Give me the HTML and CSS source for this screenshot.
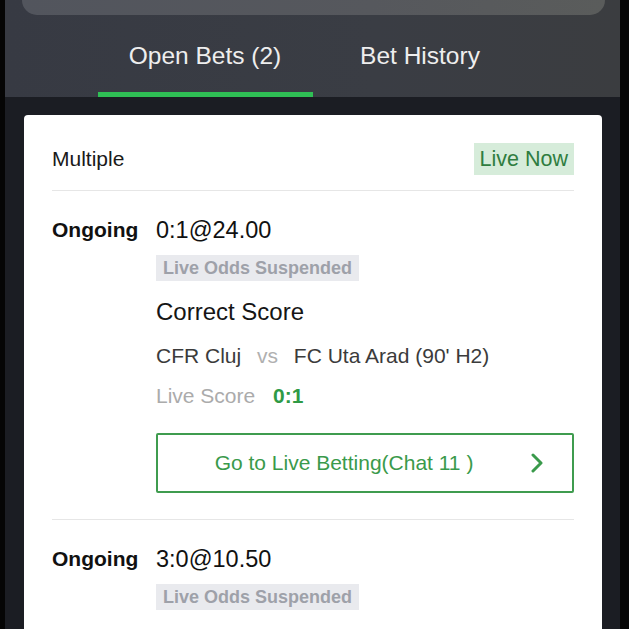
FILE: index.html
```html
<!DOCTYPE html>
<html lang="en">
<head>
    <meta charset="UTF-8">
    <meta name="viewport" content="width=device-width, initial-scale=1.0">
    <link rel="stylesheet" href="styles.css">
    <title>Open Bets</title>
</head>
<body>
    <div class="screen">
        <div class="header">
            <div class="search"></div>
            <div class="tabs">
                <div class="tab active">Open Bets (2)</div>
                <div class="tab">Bet History</div>
            </div>
        </div>

        <div class="content">
            <div class="card">
                <div class="cardHead">
                    <span class="betType">Multiple</span>
                    <span class="liveNow">Live Now</span>
                </div>

                <div class="bet">
                    <div class="status">Ongoing</div>
                    <div class="details">
                        <div class="odds">0:1@24.00</div>
                        <div class="suspended">Live Odds Suspended</div>
                        <div class="market">Correct Score</div>
                        <div class="teams">CFR Cluj <span class="vs">vs</span> FC Uta Arad (90' H2)</div>
                        <div class="score">Live Score <b>0:1</b></div>
                        <div class="liveBtn">
                            <span class="btnText">Go to Live Betting(Chat 11 )</span>
                            <svg class="chevron" width="14" height="20" viewBox="0 0 14 20">
                                <path d="M3 2 L11 10 L3 18" fill="none" stroke="#3a9a4b" stroke-width="3" stroke-linecap="round" stroke-linejoin="round"/>
                            </svg>
                        </div>
                    </div>
                </div>

                <div class="bet">
                    <div class="status">Ongoing</div>
                    <div class="details">
                        <div class="odds">3:0@10.50</div>
                        <div class="suspended">Live Odds Suspended</div>
                        <div class="market">Correct Score</div>
                    </div>
                </div>
            </div>
        </div>
    </div>
</body>
</html>
```

FILE: styles.css
```css
body{
    margin: 0;
    background-color: #050505;
    font-family: "Liberation Sans", Arial, sans-serif;
    overflow: hidden;
    height: 629px;
}

.screen{
    margin: 0 9px 0 5px;
    height: 629px;
    overflow: hidden;
    background-color: #1b1d23;
}

.header{
    background: linear-gradient(90deg, #373a43, #3a3d44 60%, #3b3d40);
    padding-top: 1px;
}

.search{
    margin: -31px 15px 0 17px;
    height: 45px;
    border-radius: 15px;
    background: linear-gradient(90deg, #52555d, #56585d 60%, #5a5c5b);
}

.tabs{
    display: flex;
    justify-content: center;
    height: 82px;
}

.tab{
    width: 215px;
    display: flex;
    justify-content: center;
    align-items: center;
    color: #eeeeee;
    font-size: 24.5px;
    box-sizing: border-box;
    border-bottom: 5px solid transparent;
    padding-top: 4px;
}

.tab.active{
    border-bottom-color: #2fbf55;
}

.content{
    padding: 18px 18px 0 19px;
}

.card{
    background-color: #ffffff;
    border-radius: 4px;
    padding: 28px 28px 0 28px;
    height: 600px;
}

.cardHead{
    display: flex;
    justify-content: space-between;
    align-items: center;
    padding-bottom: 15px;
    border-bottom: 1px solid #e6e6e6;
}

.betType{
    font-size: 21px;
    color: #1a1a1a;
}

.liveNow{
    background-color: #d6ecda;
    color: #2f7d40;
    font-size: 21.5px;
    line-height: 32px;
    padding: 0 6px;
}

.bet{
    display: flex;
    padding: 26px 0 26px 0;
    border-bottom: 1px solid #e6e6e6;
}

.status{
    width: 104px;
    font-size: 21px;
    font-weight: bold;
    color: #111111;
    line-height: 26px;
}

.details{
    flex: 1;
}

.odds{
    font-size: 23.5px;
    color: #111111;
    line-height: 26px;
}

.suspended{
    display: inline-block;
    margin-top: 12px;
    background-color: #e9eaee;
    color: #9ea1a9;
    font-size: 18px;
    font-weight: bold;
    line-height: 26px;
    padding: 0 7px;
}

.market{
    margin-top: 17px;
    font-size: 24px;
    color: #151515;
    line-height: 28px;
}

.teams{
    margin-top: 18px;
    font-size: 21px;
    color: #3b3b3b;
    line-height: 24px;
}

.teams .vs{
    color: #b0b0b0;
    margin: 0 10px;
}

.score{
    margin-top: 16px;
    font-size: 21px;
    color: #ababab;
    line-height: 24px;
}

.score b{
    color: #2f9a45;
    margin-left: 12px;
}

.liveBtn{
    margin-top: 25px;
    height: 60px;
    box-sizing: border-box;
    border: 2px solid #3f9c4f;
    border-radius: 2px;
    display: flex;
    align-items: center;
    padding-right: 28px;
}

.btnText{
    flex: 1;
    text-align: center;
    color: #3a9a4b;
    font-size: 21px;
}

.chevron{
    display: block;
}
```
